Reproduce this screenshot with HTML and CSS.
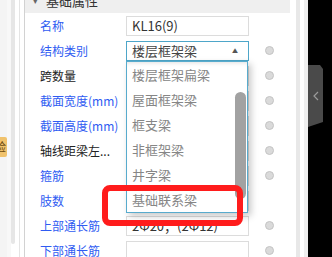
FILE: index.html
```html
<!DOCTYPE html>
<html lang="zh-CN">
<head>
    <meta charset="UTF-8">
    <title>构件属性</title>
    <link rel="stylesheet" href="styles.css">
</head>
<body>

    <!-- 左侧停靠栏 -->
    <div class="dock">
        <div class="badge">验</div>
    </div>
    <div class="gutter"></div>
    <div class="vscroll"></div>
    <div class="gap"></div>
    <div class="gap gap-dark"></div>

    <!-- 属性面板 -->
    <div class="panel">
        <div class="group-head">
            <span class="caret">▾</span>
            <span>基础属性</span>
        </div>

        <div class="row">
            <span class="label blue">名称</span>
            <div class="field">KL16(9)</div>
            <span></span>
        </div>
        <div class="row">
            <span class="label blue">结构类别</span>
            <div class="field select">楼层框架梁<span class="arrow">▲</span></div>
            <span class="dot"></span>
        </div>
        <div class="row">
            <span class="label">跨数量</span>
            <div class="field"></div>
            <span class="dot"></span>
        </div>
        <div class="row">
            <span class="label blue">截面宽度(mm)</span>
            <div class="field"></div>
            <span class="dot"></span>
        </div>
        <div class="row">
            <span class="label blue">截面高度(mm)</span>
            <div class="field"></div>
            <span class="dot"></span>
        </div>
        <div class="row">
            <span class="label">轴线距梁左...</span>
            <div class="field"></div>
            <span class="dot"></span>
        </div>
        <div class="row">
            <span class="label blue">箍筋</span>
            <div class="field"></div>
            <span class="dot"></span>
        </div>
        <div class="row">
            <span class="label blue">肢数</span>
            <div class="field"></div>
            <span></span>
        </div>
        <div class="row">
            <span class="label blue">上部通长筋</span>
            <div class="field">2Φ20；(2Φ12)</div>
            <span class="dot"></span>
        </div>
        <div class="row">
            <span class="label blue">下部通长筋</span>
            <div class="field"></div>
            <span class="dot"></span>
        </div>

        <!-- 下拉列表 -->
        <div class="dropdown">
            <div class="item">楼层框架扁梁</div>
            <div class="item">屋面框架梁</div>
            <div class="item">框支梁</div>
            <div class="item">非框架梁</div>
            <div class="item">井字梁</div>
            <div class="item">基础联系梁</div>
            <div class="thumb"></div>
        </div>
    </div>

    <div class="rail">
        <div class="rail-a"></div>
        <div class="rail-b"></div>
        <div class="rail-c"></div>
        <div class="rail-d"></div>
    </div>

    <div class="dark">
        <div class="tab">
            <svg width="6" height="10" viewBox="0 0 6 10"><polyline points="5,1 1,5 5,9" fill="none" stroke="#9a9a9a" stroke-width="1.2"/></svg>
        </div>
    </div>

    <!-- 标注框 -->
    <div class="mark"></div>

</body>
</html>
```

FILE: styles.css
```css
body {
    margin: 0;
    width: 332px;
    height: 257px;
    overflow: hidden;
    display: flex;
    position: relative;
    background: #fff;
    font-family: "Noto Sans CJK SC", "Microsoft YaHei", sans-serif;
    font-size: 12px;
    color: #222;
}
.dock {
    width: 7px;
    flex-shrink: 0;
    background: #f4f4f4;
    padding-top: 137px;
    overflow: hidden;
}
.badge {
    width: 7px;
    height: 20px;
    background: #f0c26c;
    color: #6b4a10;
    font-size: 12px;
    line-height: 20px;
    text-indent: -6px;
    white-space: nowrap;
    border-radius: 0 2px 2px 0;
}
.gutter {
    width: 4px;
    flex-shrink: 0;
    background: #f8f8f8;
}
.vscroll {
    width: 4px;
    height: 244px;
    flex-shrink: 0;
    background: #e6e6e6;
    border-radius: 0 0 2px 2px;
}
.gap {
    width: 4px;
    flex-shrink: 0;
    border-right: 1px solid #e4e4e4;
}
.gap-dark {
    border-right-color: #d2d2d2;
}
.panel {
    width: 265px;
    flex-shrink: 0;
    position: relative;
    display: flex;
    flex-direction: column;
}
.group-head {
    height: 25px;
    margin-top: -12px;
    flex-shrink: 0;
    background: #efefef;
    display: flex;
    align-items: center;
    padding-left: 8px;
    gap: 8px;
    font-size: 13px;
    color: #333;
}
.caret {
    font-size: 9px;
    color: #666;
}
.row {
    height: 25px;
    flex-shrink: 0;
    display: grid;
    grid-template-columns: 86px 123px 1fr;
    align-items: center;
    padding-left: 15px;
}
.label {
    white-space: nowrap;
    color: #222;
}
.label.blue {
    color: #2f5cf2;
}
.field {
    height: 20px;
    box-sizing: border-box;
    border: 1px solid #dcdcdc;
    padding-left: 5px;
    font-size: 13px;
    line-height: 18px;
    color: #333;
    white-space: nowrap;
    overflow: hidden;
}
.select {
    border-color: #4ea6c9;
    color: #444;
    display: flex;
    justify-content: space-between;
}
.arrow {
    font-size: 6px;
    color: #555;
    padding-right: 10px;
}
.dot {
    justify-self: center;
    width: 9px;
    height: 9px;
    box-sizing: border-box;
    border-radius: 50%;
    background: #dadada;
    border: 1px solid #c4c4c4;
}
.dropdown {
    position: absolute;
    left: 101px;
    top: 61px;
    width: 122px;
    box-sizing: border-box;
    background: #fff;
    border: 1px solid #58abcd;
    box-shadow: 3px 3px 7px rgba(0,0,0,0.22), inset 0 4px 4px -3px rgba(0,0,0,0.12);
}
.item {
    height: 25px;
    line-height: 25px;
    padding-left: 5px;
    font-size: 13px;
    color: #868686;
}
.thumb {
    position: absolute;
    right: 1px;
    top: 30px;
    width: 11px;
    height: 107px;
    border-radius: 6px;
    background: #a2a2a2;
}
.rail {
    width: 18px;
    flex-shrink: 0;
    display: flex;
}
.rail-a { width: 6px; background: #fff; }
.rail-b { width: 4px; background: #e8e8e8; }
.rail-c { width: 4px; background: #fff; }
.rail-d { width: 4px; background: #efefef; }
.dark {
    flex: 1;
    background: #000;
    padding-top: 65px;
}
.tab {
    width: 15px;
    height: 62px;
    background: #4a4a4a;
    clip-path: polygon(0 0, 12px 0, 15px 4px, 15px 57px, 0 62px);
    display: flex;
    align-items: center;
    padding-left: 5px;
    box-sizing: border-box;
}
.mark {
    position: absolute;
    left: 102px;
    top: 185px;
    width: 141px;
    height: 41px;
    box-sizing: border-box;
    border: 6px solid #ff1c1c;
    border-radius: 8px;
}
```
